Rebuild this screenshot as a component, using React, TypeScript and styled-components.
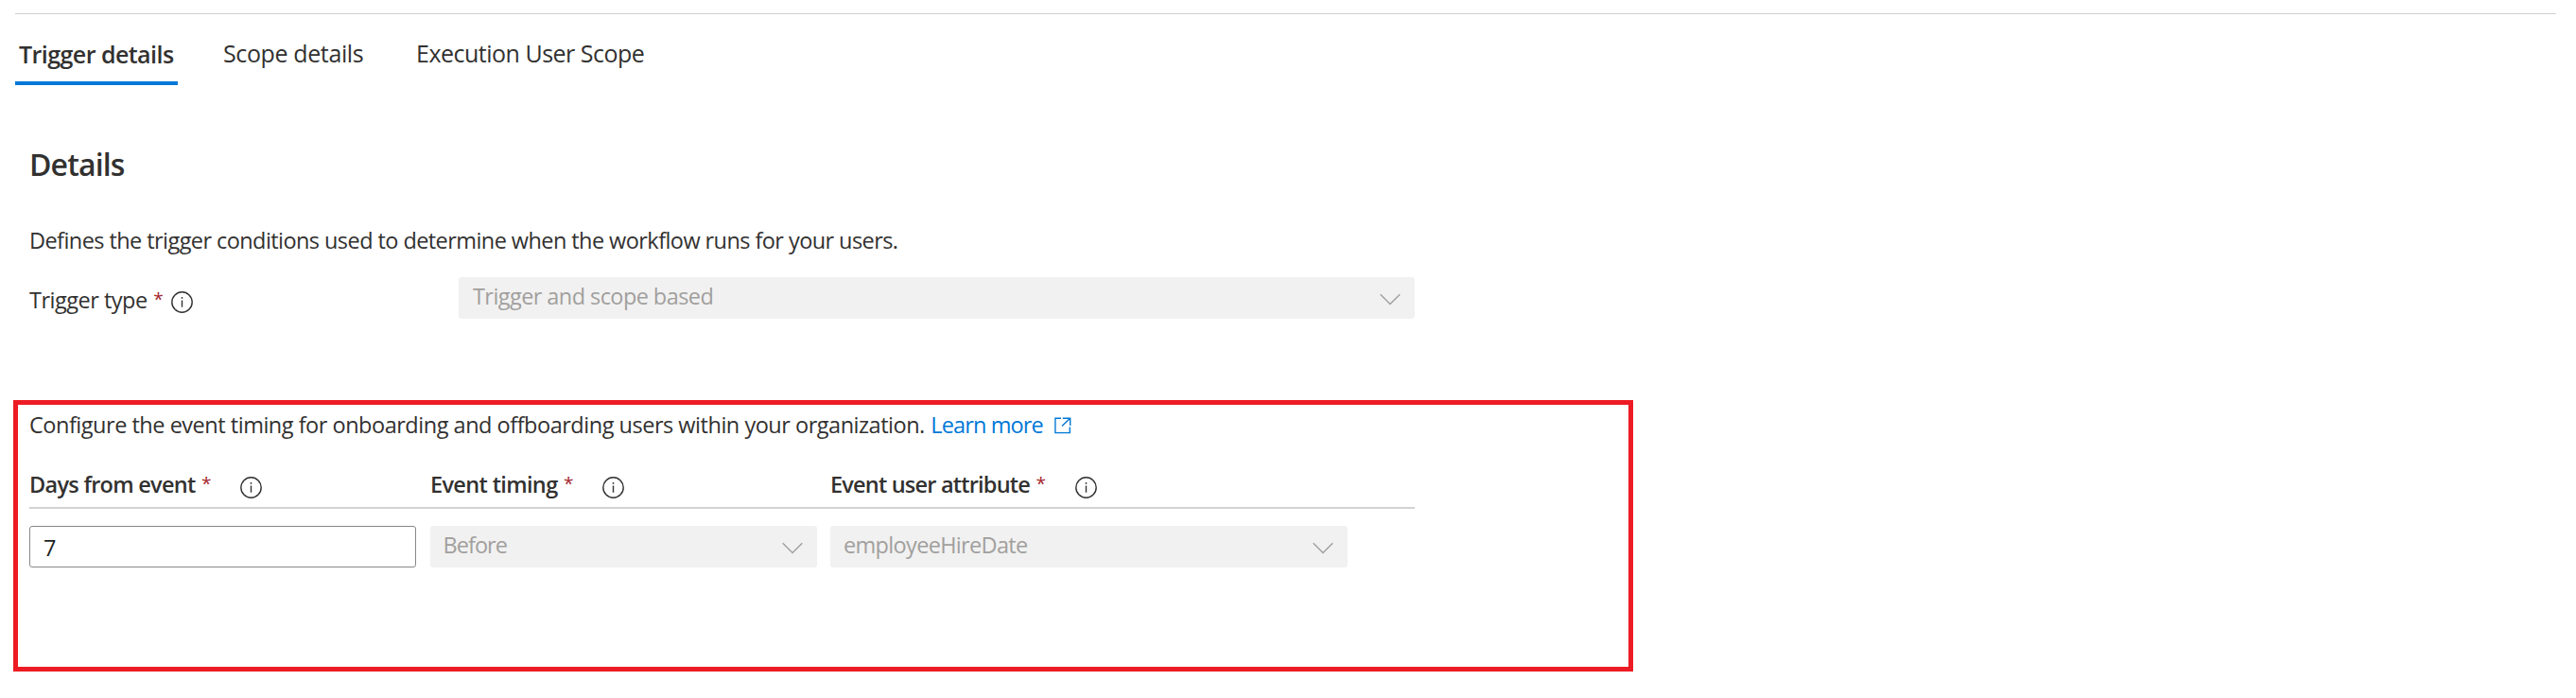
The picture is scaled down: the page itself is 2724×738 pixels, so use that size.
import React from "react";
import styled, { createGlobalStyle } from "styled-components";

const GlobalStyle = createGlobalStyle`
  * { box-sizing: border-box; }
  body { margin: 0; background: #fff; color: #323130; font-family: "Open Sans", sans-serif; }
`;

const Page = styled.main`
  width: 2724px;
  height: 738px;
  display: flex;
  flex-direction: column;
  overflow: hidden;
`;

const TopRule = styled.div`
  flex: none;
  height: 1px;
  margin: 14px 21px 0 16px;
  background: #d2d0ce;
`;

const TabBar = styled.nav`
  display: flex;
  flex: none;
  gap: 44px;
  height: 75px;
  padding-left: 16px;
`;

const Tab = styled.div<{ $active?: boolean; $width: number; $spacing: number }>`
  width: ${(p) => p.$width}px;
  padding: ${(p) => (p.$active ? "26px 0 0 4px" : "25px 0 0 4px")};
  border-bottom: 4px solid ${(p) => (p.$active ? "#0078d7" : "transparent")};
  font-size: 25px;
  line-height: 32px;
  font-weight: ${(p) => (p.$active ? 600 : 400)};
  letter-spacing: ${(p) => p.$spacing}px;
  white-space: nowrap;
`;

const Section = styled.section`
  flex: none;
  padding-left: 31px;
`;

const Heading = styled.h2`
  margin: 63px 0 0;
  font-size: 32px;
  line-height: 42px;
  font-weight: 600;
  letter-spacing: -0.85px;
`;

const Text = styled.span<{ $spacing?: number; $bold?: boolean; $indent?: number }>`
  margin-left: ${(p) => p.$indent ?? 0}px;
  font-size: 23.5px;
  line-height: 32px;
  font-weight: ${(p) => (p.$bold ? 600 : 400)};
  letter-spacing: ${(p) => p.$spacing ?? -0.57}px;
  white-space: nowrap;
`;

const Description = styled.p<{ $top: number }>`
  display: flex;
  height: 32px;
  margin: ${(p) => p.$top}px 0 0;
`;

const Field = styled.div`
  display: flex;
  height: 44px;
  margin-top: 23px;
`;

const FieldLabel = styled.div`
  display: flex;
  width: 454px;
  padding-top: 8px;
`;

const Required = styled.span`
  width: 11px;
  height: 32px;
  margin-left: 6.5px;
  font-size: 19px;
  line-height: 30px;
  color: #a4262c;
`;

const InfoSvg = styled.svg<{ $gap: number; $top: number }>`
  flex: none;
  margin: ${(p) => p.$top}px 0 0 ${(p) => p.$gap}px;
`;

const Select = styled.div<{ $width: number }>`
  display: flex;
  justify-content: space-between;
  width: ${(p) => p.$width}px;
  height: 44px;
  padding: 4px 15px 0 15px;
  border-radius: 3px;
  background: #f1f1f1;
  color: #a19f9d;
`;

const ChevronSvg = styled.svg`
  flex: none;
  margin-top: 13px;
`;

const Panel = styled.section`
  flex: none;
  width: 1713px;
  height: 287px;
  margin: 86px 0 0 14px;
  padding: 5px 12px 0;
  border: 5px solid #ed1c24;
`;

const Link = styled.a`
  display: flex;
  margin-left: 6.5px;
  color: #0078d7;
`;

const LinkSvg = styled.svg`
  margin: 8px 0 0 12px;
`;

const HeaderRow = styled.div`
  display: grid;
  grid-template-columns: 424px 423px 1fr;
  width: 1465px;
  height: 73px;
  padding-top: 31px;
  border-bottom: 2px solid #d2d2d2;
`;

const HeaderCell = styled.div`
  display: flex;
  align-items: flex-start;
`;

const InputRow = styled.div`
  display: grid;
  grid-template-columns: 424px 423px 1fr;
  width: 1465px;
  margin-top: 18px;
`;

const NumberBox = styled.div`
  width: 409px;
  height: 44px;
  padding: 6px 0 0 14px;
  border: 1px solid #8a8886;
  border-radius: 3px;
  color: #201f1e;
`;

const Info = ({ gap, top }: { gap: number; top: number }) => (
  <InfoSvg $gap={gap} $top={top} width="23" height="23" viewBox="0 0 23 23" fill="none">
    <circle cx="11.5" cy="11.5" r="10.7" stroke="#323130" strokeWidth="1.4" />
    <path d="M11.5 9.5V16.7" stroke="#323130" strokeWidth="1.4" />
    <circle cx="11.5" cy="6.9" r="0.95" fill="#323130" />
  </InfoSvg>
);

const Chevron = () => (
  <ChevronSvg width="22" height="13" viewBox="0 0 22 13" fill="none">
    <path d="M0.7 1.3L11 11.6L21.3 1.3" stroke="#a19f9d" strokeWidth="1.4" />
  </ChevronSvg>
);

const ExternalLink = () => (
  <LinkSvg width="18" height="18" viewBox="0 0 18 18" fill="none" stroke="#0078d7" strokeWidth="1.4">
    <path d="M7 1.2H0.9V16.6H16.3V10.6M8.8 1.2H16.7V9M8 9.6L16.3 1.4" />
  </LinkSvg>
);

const Dropdown = ({ value, width, spacing, indent }: { value: string; width: number; spacing: number; indent?: number }) => (
  <Select $width={width}>
    <Text $spacing={spacing} $indent={indent}>{value}</Text>
    <Chevron />
  </Select>
);

const columns = [
  { label: "Days from event", spacing: -0.72 },
  { label: "Event timing", spacing: -0.65 },
  { label: "Event user attribute", spacing: -0.8 },
];

export default function App() {
  return (
    <Page>
      <GlobalStyle />
      <TopRule />
      <TabBar>
        <Tab $active $width={172} $spacing={-0.55}>Trigger details</Tab>
        <Tab $width={160} $spacing={-0.38}>Scope details</Tab>
        <Tab $width={250} $spacing={-0.5}>Execution User Scope</Tab>
      </TabBar>
      <Section>
        <Heading>Details</Heading>
        <Description $top={43}>
          <Text>
            Defines the trigger conditions used to determine when the workflow runs for your users.
          </Text>
        </Description>
        <Field>
          <FieldLabel>
            <Text $spacing={-0.5}>Trigger type</Text>
            <Required>*</Required>
            <Info gap={8} top={7} />
          </FieldLabel>
          <Dropdown value="Trigger and scope based" width={1011} spacing={-0.57} />
        </Field>
      </Section>
      <Panel>
        <Description $top={0}>
          <Text $spacing={-0.48}>
            Configure the event timing for onboarding and offboarding users within your organization.
          </Text>
          <Link>
            <Text $spacing={-0.88}>Learn more</Text>
            <ExternalLink />
          </Link>
        </Description>
        <HeaderRow>
          {columns.map((c) => (
            <HeaderCell key={c.label}>
              <Text $bold $spacing={c.spacing}>{c.label}</Text>
              <Required>*</Required>
              <Info gap={30} top={8} />
            </HeaderCell>
          ))}
        </HeaderRow>
        <InputRow>
          <NumberBox><Text>7</Text></NumberBox>
          <Dropdown value="Before" width={409} spacing={-0.96} indent={-1.5} />
          <Dropdown value="employeeHireDate" width={547} spacing={-0.67} indent={-1} />
        </InputRow>
      </Panel>
    </Page>
  );
}
